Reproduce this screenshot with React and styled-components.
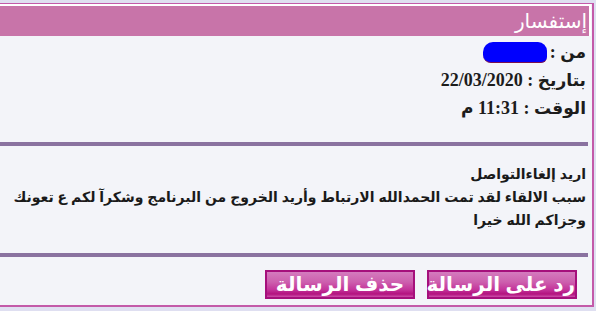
import React from 'react';
import styled, { createGlobalStyle } from 'styled-components';

const GlobalStyle = createGlobalStyle`
  html, body {
    margin: 0;
    padding: 0;
    background: #dfdff1;
  }
  body {
    padding: 3px 2px 4px 0;
    direction: rtl;
  }
`;

const Panel = styled.div`
  background: #f3f4f9;
  border-top: 1px solid #c35aa9;
  border-right: 2px solid #c35aa9;
  border-bottom: 2px solid #c35aa9;
  overflow: hidden;
`;

const Header = styled.div`
  height: 30px;
  line-height: 30px;
  background: #c874a9;
  border-top: 2px solid #ffffff;
  border-right: 2px solid #ffffff;
  color: #ffffff;
  font-family: "Liberation Serif", "DejaVu Sans", serif;
  font-size: 20px;
  padding-right: 2px;
  margin-right: 1px;
`;

const Info = styled.div`
  padding: 2px 6px 0 0;
  font-family: "Liberation Serif", "DejaVu Serif", serif;
  font-weight: bold;
  font-size: 18px;
  color: #1c1c1c;
`;

const InfoRow = styled.div`
  height: 28px;
  line-height: 28px;
  white-space: nowrap;
`;

const Label = styled.span`
  font-family: "DejaVu Sans", sans-serif;
  font-size: 17px;
`;

const Hidden = styled.span`
  display: inline-block;
  width: 64px;
  height: 20px;
  vertical-align: -5px;
  margin-right: 3px;
  background: #0000fe;
  border-radius: 10px 9px 6px 8px;
  border-bottom: 1px solid #7a1050;
`;

const Rule = styled.div`
  height: 4px;
  background: #8a72a0;
  margin: ${p => p.$top}px 4px 0 0;
`;

const Message = styled.div`
  padding: 17px 6px 0 0;
  font-family: "Liberation Sans", "DejaVu Sans", sans-serif;
  font-weight: bold;
  font-size: 14px;
  color: #1a1a1a;
`;

const MessageLine = styled.div`
  height: 23px;
  line-height: 23px;
  white-space: nowrap;
`;

const Actions = styled.div`
  display: flex;
  gap: 12px;
  padding: 13px 15px 6px 0;
`;

const Button = styled.button`
  width: 150px;
  height: 29px;
  padding: 0;
  border: 2px solid #a5107c;
  background: linear-gradient(
    to bottom,
    #d47bbe 0%,
    #cd5fae 40%,
    #c4359b 70%,
    #b3127f 88%,
    #cc4ea8 100%
  );
  color: #ffffff;
  font-family: "Liberation Sans", "DejaVu Sans", sans-serif;
  font-weight: bold;
  font-size: 20px;
  direction: rtl;
  text-align: center;
  line-height: 25px;
  white-space: nowrap;
  cursor: pointer;
`;

export default function App() {
  return (
    <>
      <GlobalStyle />
      <Panel>
        <Header>إستفسار</Header>
        <Info>
          <InfoRow><Label>من</Label> :<Hidden /></InfoRow>
          <InfoRow><Label>بتاريخ</Label> : 22/03/2020</InfoRow>
          <InfoRow><Label>الوقت</Label> : 11:31 <Label>م</Label></InfoRow>
        </Info>
        <Rule $top={20} />
        <Message>
          <MessageLine>اريد إلغاءالتواصل</MessageLine>
          <MessageLine>سبب الالقاء لقد تمت الحمدالله الارتباط وأريد الخروج من البرنامج وشكرآ لكم ع تعونك</MessageLine>
          <MessageLine>وجزاكم الله خيرا</MessageLine>
        </Message>
        <Rule $top={21} />
        <Actions>
          <Button>رد على الرسالة</Button>
          <Button>حذف الرسالة</Button>
        </Actions>
      </Panel>
    </>
  );
}
